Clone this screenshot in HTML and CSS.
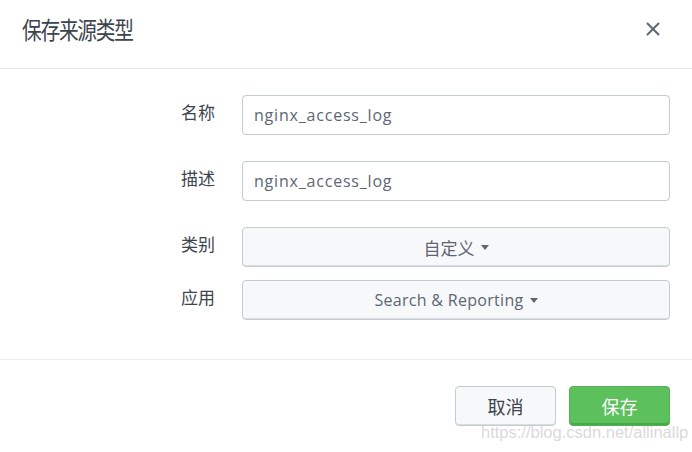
FILE: index.html
```html
<!DOCTYPE html>
<html lang="zh-CN">
<head>
<meta charset="utf-8">
<title>保存来源类型</title>
<link rel="stylesheet" href="styles.css">
</head>
<body>
<div class="modal">
  <div class="modal-header">
    <h1 class="modal-title">保存来源类型</h1>
    <button class="close" aria-label="关闭">
      <svg width="14" height="14" viewBox="0 0 14 14"><path d="M1.5 1.5 L12.5 12.5 M12.5 1.5 L1.5 12.5" stroke="#5c6773" stroke-width="2" stroke-linecap="round" fill="none"/></svg>
    </button>
  </div>
  <div class="modal-body">
    <div class="row gap-l">
      <label class="label">名称</label>
      <div class="input">nginx_access_log</div>
    </div>
    <div class="row gap-l">
      <label class="label">描述</label>
      <div class="input">nginx_access_log</div>
    </div>
    <div class="row gap-s">
      <label class="label">类别</label>
      <div class="dropdown"><span>自定义</span><i class="caret"></i></div>
    </div>
    <div class="row">
      <label class="label">应用</label>
      <div class="dropdown"><span class="latin">Search &amp; Reporting</span><i class="caret"></i></div>
    </div>
  </div>
  <div class="modal-footer">
    <button class="btn btn-default">取消</button>
    <button class="btn btn-primary">保存</button>
  </div>
  <div class="watermark">https://blog.csdn.net/allinallp</div>
</div>
</body>
</html>
```

FILE: styles.css
```css
* { box-sizing: border-box; }
html, body {
  margin: 0;
  padding: 0;
  background: #ffffff;
}
body {
  font-family: "Open Sans", "Noto Sans CJK SC", sans-serif;
  color: #3c444d;
}
.modal {
  position: relative;
  width: 692px;
  height: 452px;
  overflow: hidden;
}
.modal-header {
  height: 69px;
  padding: 14px 32px 0 22px;
  display: flex;
  justify-content: space-between;
  align-items: flex-start;
  border-bottom: 1px solid #e3e7ec;
}
.modal-title {
  margin: 0;
  font-family: "Noto Sans CJK SC", sans-serif;
  font-weight: 400;
  font-size: 24px;
  line-height: 30px;
  letter-spacing: -1.5px;
  color: #3c444d;
  transform: scaleX(0.82);
  transform-origin: left center;
}
.close {
  border: 0;
  background: none;
  padding: 0;
  margin-top: 8px;
  width: 14px;
  height: 14px;
  display: block;
}
.close svg { display: block; }
.modal-body {
  padding: 26px 22px 39px 0;
  border-bottom: 1px solid #eceef2;
}
.row {
  display: grid;
  grid-template-columns: 215px 428px;
  column-gap: 27px;
}
.gap-l { margin-bottom: 26px; }
.gap-s { margin-bottom: 13px; }
.label {
  text-align: right;
  font-family: "Noto Sans CJK SC", sans-serif;
  font-size: 17px;
  line-height: 24px;
  padding-top: 5px;
  color: #3c444d;
}
.input {
  height: 40px;
  border: 1px solid #c3cbd4;
  border-radius: 4px;
  padding: 0 11px;
  font-family: "Open Sans", sans-serif;
  font-size: 16px;
  letter-spacing: 0.8px;
  line-height: 38px;
  color: #5c6773;
  background: #fff;
}
.dropdown {
  height: 40px;
  border: 1px solid #c3cbd4;
  border-radius: 4px;
  background: #f7f8fa;
  box-shadow: inset 0 -1px 0 #d8dde3;
  display: flex;
  justify-content: center;
  align-items: center;
  font-family: "Noto Sans CJK SC", sans-serif;
  font-size: 17px;
  color: #5c6773;
}
.dropdown .latin {
  font-family: "Open Sans", sans-serif;
  font-size: 16px;
  letter-spacing: 0.3px;
}
.caret {
  display: inline-block;
  width: 0;
  height: 0;
  margin-left: 6px;
  margin-top: 1px;
  border-left: 4px solid transparent;
  border-right: 4px solid transparent;
  border-top: 5px solid #5c6773;
}
.modal-footer {
  padding: 26px 22px 0 0;
  display: flex;
  justify-content: flex-end;
  gap: 13px;
}
.btn {
  width: 101px;
  height: 40px;
  border-radius: 4px;
  font-family: "Noto Sans CJK SC", sans-serif;
  font-size: 18px;
  padding: 0;
}
.btn-default {
  background: #f7f8fa;
  border: 1px solid #c3cbd4;
  box-shadow: inset 0 -1px 0 #d8dde3;
  color: #3c444d;
}
.btn-primary {
  background: #5cc05c;
  border: 1px solid #53b053;
  box-shadow: inset 0 -2px 0 #4aa84a;
  color: #ffffff;
}
.watermark {
  position: absolute;
  left: 481px;
  top: 423px;
  font-family: "Liberation Sans", sans-serif;
  font-size: 16.5px;
  color: rgba(205, 205, 205, 0.75);
  pointer-events: none;
  white-space: nowrap;
}
```
